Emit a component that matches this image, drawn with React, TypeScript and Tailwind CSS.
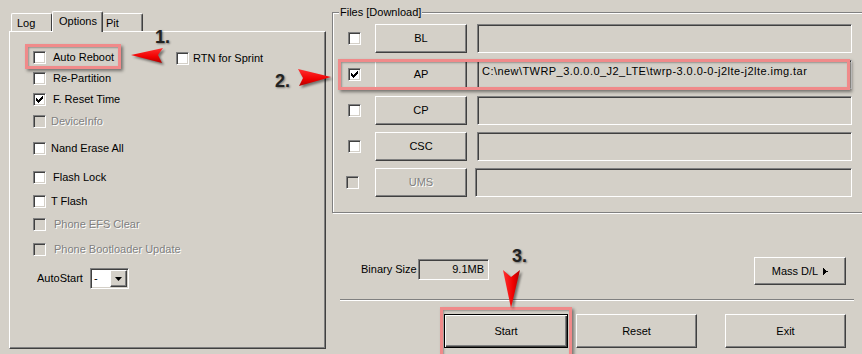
import React from "react";

const raised =
  "border border-t-white border-l-white border-r-[#404040] border-b-[#404040] shadow-[inset_-1px_-1px_0_#808080] bg-[#D4D0C8]";
const sunken =
  "border border-t-[#808080] border-l-[#808080] border-r-white border-b-white shadow-[inset_1px_1px_0_#404040,inset_-1px_-1px_0_#D4D0C8]";
const dimText = "text-[#808080] [text-shadow:1px_1px_0_#fff]";

function Check({ checked = false, disabled = false, className = "" }: { checked?: boolean; disabled?: boolean; className?: string }) {
  return (
    <span
      className={`w-[13px] h-[13px] shrink-0 flex items-center justify-center ${sunken} ${
        disabled ? "bg-[#D4D0C8]" : "bg-white"
      } ${className}`}
    >
      {checked && (
        <svg width="7" height="7" viewBox="0 0 7 7" shapeRendering="crispEdges">
          <path d="M6 0h1v3h-1v1h-1v1h-1v1h-1v1h-1v-1h-1v-1h-1v-3h1v1h1v1h1v-1h1v-1h1z" fill="#000" />
        </svg>
      )}
    </span>
  );
}

interface OptProps {
  label: string;
  checked?: boolean;
  disabled?: boolean;
  gap: string;
  mt: string;
}

function Opt({ label, checked, disabled, gap, mt }: OptProps) {
  return (
    <div className={`flex items-center h-[13px] ${mt}`}>
      <Check checked={checked} disabled={disabled} />
      <span className={`${gap} whitespace-nowrap ${disabled ? dimText : ""}`}>{label}</span>
    </div>
  );
}

function FileRow({ name, path, checked, disabled }: { name: string; path?: string; checked?: boolean; disabled?: boolean }) {
  return (
    <div className="flex items-center h-[29px]">
      <Check checked={checked} disabled={disabled} className={disabled ? "-ml-[2px]" : ""} />
      <div className={`${disabled ? "ml-[16px]" : "ml-[14px]"} w-[92px] h-[29px] flex items-center justify-center ${raised}`}>
        <span className={disabled ? dimText : ""}>{name}</span>
      </div>
      <div className={`${disabled ? "ml-[8px] w-[377px]" : "ml-[10px] w-[375px]"} h-[29px] pl-[4px] pt-[4px] whitespace-nowrap tracking-[0.45px] ${sunken}`}>
        {path}
      </div>
    </div>
  );
}

function LeftPane() {
  return (
    <div className="w-[332px] shrink-0 flex flex-col pl-[9px] pt-[11px]">
      <div className="flex items-end h-[20px] pl-[2px]">
        <div className="w-[41px] h-[18px] pl-[5px] pt-[3px] border-l border-t border-r border-l-white border-t-white border-r-[#404040] rounded-t-[2px]">
          Log
        </div>
        <div className="relative z-10 -mb-px w-[51px] h-[21px] pl-[6px] pt-[3px] bg-[#D4D0C8] border-l border-t border-r border-l-white border-t-white border-r-[#404040] shadow-[inset_-1px_0_0_#808080] rounded-t-[2px]">
          Options
        </div>
        <div className="w-[40px] h-[18px] pl-[3px] pt-[3px] border-t border-r border-t-white border-r-[#404040] shadow-[inset_-1px_0_0_#808080] rounded-t-[2px]">
          Pit
        </div>
      </div>
      <div className="w-[317px] h-[318px] flex flex-col pl-[23px] border border-t-white border-l-white border-r-[#404040] border-b-[#404040] shadow-[inset_-1px_-1px_0_#808080]">
        <div className="flex items-start h-[13px] mt-[19px]">
          <Check />
          <span className="ml-[7px] w-[123px] whitespace-nowrap">Auto Reboot</span>
          <Check className="mt-[1px]" />
          <span className="ml-[4px] mt-[1px] whitespace-nowrap">RTN for Sprint</span>
        </div>
        <Opt label="Re-Partition" gap="ml-[7px]" mt="mt-[8px]" />
        <Opt label="F. Reset Time" checked gap="ml-[7px]" mt="mt-[8px]" />
        <Opt label="DeviceInfo" disabled gap="ml-[5px]" mt="mt-[9px]" />
        <Opt label="Nand Erase All" gap="ml-[5px]" mt="mt-[14px]" />
        <Opt label="Flash Lock" gap="ml-[7px]" mt="mt-[16px]" />
        <Opt label="T Flash" gap="ml-[5px]" mt="mt-[11px]" />
        <Opt label="Phone EFS Clear" disabled gap="ml-[8px]" mt="mt-[10px]" />
        <Opt label="Phone Bootloader Update" disabled gap="ml-[8px]" mt="mt-[12px]" />
        <div className="flex items-center h-[21px] mt-[12px] pl-[4px]">
          <span className="w-[53px]">AutoStart</span>
          <div className={`w-[39px] h-[21px] p-px flex bg-white ${sunken}`}>
            <span className="flex-1 pl-[2px] leading-[17px]">-</span>
            <div className={`w-[17px] h-[17px] flex items-center justify-center ${raised}`}>
              <svg width="7" height="4" viewBox="0 0 7 4">
                <polygon points="0,0 7,0 3.5,4" fill="#000" />
              </svg>
            </div>
          </div>
        </div>
      </div>
    </div>
  );
}

function RightPane() {
  return (
    <div className="flex-1 min-w-0 flex flex-col">
      <div className="relative shrink-0 mt-[12px] w-[545px] h-[201px] pl-[15px] pt-[11px] flex flex-col gap-[7px] border border-[#808080] shadow-[inset_1px_1px_0_#fff,1px_1px_0_#fff]">
        <span className="absolute -top-[7px] left-[6px] px-px bg-[#D4D0C8]">Files [Download]</span>
        <FileRow name="BL" />
        <FileRow name="AP" checked path="C:\new\TWRP_3.0.0.0_J2_LTE\twrp-3.0.0-0-j2lte-j2lte.img.tar" />
        <FileRow name="CP" />
        <FileRow name="CSC" />
        <FileRow name="UMS" disabled />
      </div>

      <div className="flex items-start h-[29px] mt-[44px] pl-[29px]">
        <span className="w-[57px] mt-[6px]">Binary Size</span>
        <div className={`w-[71px] h-[21px] mt-[2px] pr-[4px] pt-[3px] text-right ${sunken}`}>9.1MB</div>
        <div className={`ml-auto mr-[16px] w-[92px] h-[28px] flex items-center justify-center gap-[5px] ${raised}`}>
          <span>Mass D/L</span>
          <svg width="5" height="7" viewBox="0 0 5 7" shapeRendering="crispEdges">
            <rect x="0" y="0" width="1" height="7" fill="#000" />
            <polygon points="1,1 5,3.5 1,6" fill="#000" />
          </svg>
        </div>
      </div>

      <div className="mt-[13px] ml-[8px] w-[514px] h-[2px] border-t border-b border-t-[#808080] border-b-white" />

      <div className="flex h-[34px] mt-[13px]">
        <div className="ml-[112px] w-[124px] h-[34px] flex items-center justify-center border border-black shadow-[inset_1px_1px_0_#fff,inset_-1px_-1px_0_#404040,inset_-2px_-2px_0_#808080]">
          Start
        </div>
        <div className={`ml-[8px] w-[121px] h-[34px] flex items-center justify-center ${raised}`}>Reset</div>
        <div className={`ml-[28px] w-[121px] h-[34px] flex items-center justify-center ${raised}`}>Exit</div>
      </div>
    </div>
  );
}

function Annotations() {
  const pink = "absolute border-[3px] border-[#F08A8A] shadow-[2px_2px_3px_rgba(0,0,0,0.45),inset_1px_1px_2px_rgba(0,0,0,0.3)] pointer-events-none";
  const num = "absolute text-[18px] leading-[18px] font-bold text-[#222] [text-shadow:1px_1px_2px_rgba(0,0,0,0.45)]";
  return (
    <>
      <div className={`${pink} left-[25px] top-[44px] w-[96px] h-[25px]`} />
      <div className={`${pink} left-[338px] top-[59px] w-[512px] h-[31px]`} />
      <div className={`${pink} left-[440px] top-[307px] w-[132px] h-[54px]`} />

      <span className={`${num} left-[155px] top-[28px]`}>1.</span>
      <span className={`${num} left-[275px] top-[72px]`}>2.</span>
      <span className={`${num} left-[512px] top-[247px]`}>3.</span>

      <svg className="absolute left-[129px] top-[46px] w-[36px] h-[20px] drop-shadow-[2px_2px_1px_rgba(0,0,0,0.45)]" viewBox="0 0 36 20">
        <defs>
          <linearGradient id="a1" x1="0" y1="0" x2="0" y2="1">
            <stop offset="0" stopColor="#FF3030" />
            <stop offset="0.6" stopColor="#F00000" />
            <stop offset="1" stopColor="#B00000" />
          </linearGradient>
        </defs>
        <polygon points="2,9 34,2 29,9 33,17" fill="url(#a1)" />
      </svg>
      <svg className="absolute left-[296px] top-[67px] w-[37px] h-[22px] drop-shadow-[2px_2px_1px_rgba(0,0,0,0.45)]" viewBox="0 0 37 22">
        <defs>
          <linearGradient id="a2" x1="0" y1="0" x2="0" y2="1">
            <stop offset="0" stopColor="#FF3030" />
            <stop offset="0.6" stopColor="#F00000" />
            <stop offset="1" stopColor="#B00000" />
          </linearGradient>
        </defs>
        <polygon points="2,2 35,10 3,19 7,11" fill="url(#a2)" />
      </svg>
      <svg className="absolute left-[500px] top-[268px] w-[22px] h-[42px] drop-shadow-[2px_2px_1px_rgba(0,0,0,0.45)]" viewBox="0 0 22 42">
        <defs>
          <linearGradient id="a3" x1="0" y1="0" x2="1" y2="0">
            <stop offset="0" stopColor="#FF3030" />
            <stop offset="0.6" stopColor="#F00000" />
            <stop offset="1" stopColor="#B00000" />
          </linearGradient>
        </defs>
        <polygon points="3,2 11,9 20,2 11,40" fill="url(#a3)" />
      </svg>
    </>
  );
}

export default function App() {
  return (
    <div className="relative w-[862px] h-[354px] overflow-hidden flex bg-[#D4D0C8] text-[11px] leading-[13px] text-black font-['Liberation_Sans',Arial,sans-serif]">
      <LeftPane />
      <RightPane />
      <Annotations />
    </div>
  );
}
